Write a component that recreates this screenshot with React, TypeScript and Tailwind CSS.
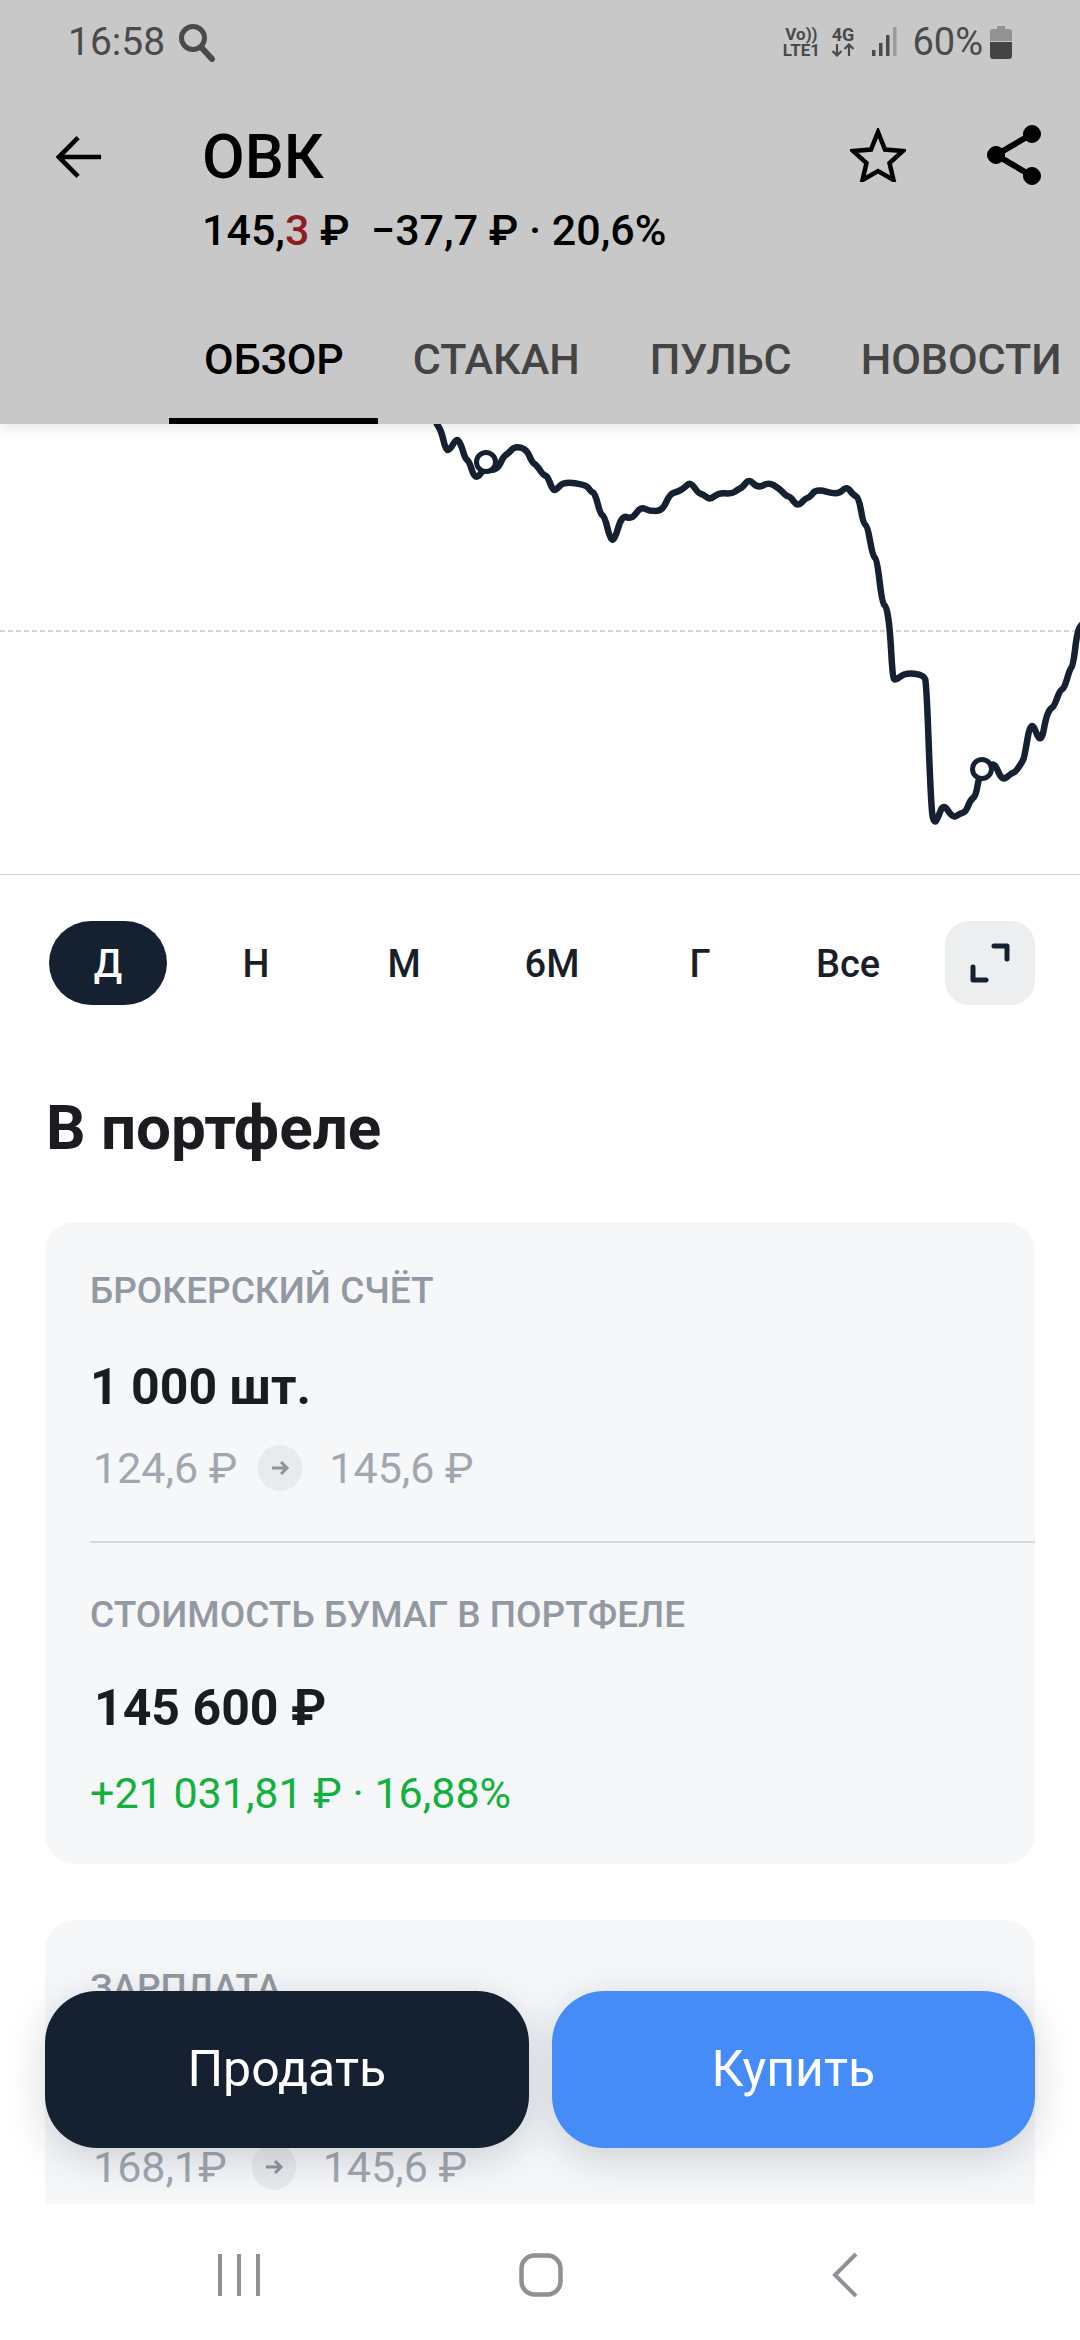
// Points read off the reference chart, as crop coordinates
const chartPoints = [
  [85, 42], [95, 60], [105, 120], [115, 120], [130, 85], [140, 100], [150, 145], [160, 155], [170, 200], [182, 200],
  [190, 180], [225, 180], [238, 140], [250, 130], [265, 108], [292, 118], [305, 158], [315, 165], [330, 195], [340, 198],
  [352, 240], [360, 240], [378, 215], [430, 225], [440, 245], [450, 250], [462, 312], [472, 320], [485, 390], [495, 390],
  [512, 315], [535, 328], [555, 290], [575, 303], [605, 303], [622, 252], [640, 245], [655, 235], [670, 215], [688, 250],
  [698, 252], [715, 270], [735, 248], [765, 252], [780, 238], [790, 232], [805, 206], [825, 235], [850, 217], [875, 235],
  [890, 258], [900, 260], [917, 290], [935, 265], [945, 262], [960, 236], [1010, 255], [1030, 228], [1045, 255], [1058, 262],
  [1068, 340], [1078, 348], [1090, 438], [1100, 448], [1112, 580], [1122, 590], [1130, 660], [1136, 800], [1142, 812], [1165, 788],
  [1208, 795], [1214, 820], [1225, 1200], [1232, 1240], [1240, 1225], [1253, 1180], [1275, 1224], [1290, 1212], [1305, 1205], [1315, 1170],
  [1328, 1158], [1335, 1100], [1345, 1105], [1368, 1048], [1388, 1114], [1410, 1090], [1420, 1085], [1435, 1055], [1440, 1040], [1455, 925],
  [1478, 1006], [1490, 920], [1500, 895], [1508, 890], [1522, 840], [1532, 835], [1545, 775], [1552, 770], [1562, 660], [1575, 640],
]

const toChart = ([x, y]: number[]) => [400 + x / 2.306, 410 + y / 3 - 424]

// Round the corners by curving through the midpoints
function buildLinePath() {
  const pts = chartPoints.map(toChart)
  let d = `M${pts[0][0].toFixed(1)} ${pts[0][1].toFixed(1)}`
  for (let i = 1; i < pts.length - 1; i++) {
    const mx = (pts[i][0] + pts[i + 1][0]) / 2
    const my = (pts[i][1] + pts[i + 1][1]) / 2
    d += ` Q${pts[i][0].toFixed(1)} ${pts[i][1].toFixed(1)} ${mx.toFixed(1)} ${my.toFixed(1)}`
  }
  const last = pts[pts.length - 1]
  return `${d} L${last[0].toFixed(1)} ${last[1].toFixed(1)}`
}

function Chart() {
  return (
    <div className="h-[451px] shrink-0 border-b border-[#d0d2d4]">
      <svg viewBox="0 0 1080 450" className="block h-[450px] w-[1080px]">
        <line x1="0" y1="207" x2="1080" y2="207" stroke="#c8cacc" strokeWidth="1.5" strokeDasharray="5 3" />
        <path d={buildLinePath()} fill="none" stroke="#152030" strokeWidth="6.5" strokeLinejoin="round" strokeLinecap="round" />
        <circle cx="486" cy="38" r="9.500" fill="#fff" stroke="#152030" strokeWidth="5" />
        <circle cx="982" cy="345" r="9.500" fill="#fff" stroke="#152030" strokeWidth="5" />
      </svg>
    </div>
  )
}

function StatusBar() {
  return (
    <div className="flex h-[84px] items-center pl-[68px] pr-[68px] text-[#4a4a4a]">
      <span className="text-[39px] leading-[44px]">16:58</span>
      <svg viewBox="0 0 40 40" className="ml-[12px] h-[40px] w-[40px]" fill="none" stroke="#4a4a4a">
        <circle cx="16" cy="16" r="11.500" strokeWidth="5" />
        <path d="M24 25l11 12" strokeWidth="6" strokeLinecap="round" />
      </svg>
      <div className="ml-auto flex items-center">
        <div className="flex w-[40px] flex-col items-center text-[17px] font-bold leading-[16px]">
          <span>Vo))</span>
          <span>LTE1</span>
        </div>
        <div className="ml-[8px] flex w-[27px] flex-col items-center text-[18px] font-bold leading-[16px]">
          <span>4G</span>
          <svg viewBox="0 0 26 14" className="h-[14px] w-[26px]" fill="none" stroke="#4a4a4a" strokeWidth="2.200">
            <path d="M7 1v11M2.500 8L7 12.500 11.500 8M19 13V2M14.500 6L19 1.500 23.500 6" />
          </svg>
        </div>
        <svg viewBox="0 0 26 32" className="ml-[15px] h-[32px] w-[26px]">
          <rect x="1" y="24" width="3.500" height="6" fill="#4a4a4a" />
          <rect x="8" y="17" width="3.500" height="13" fill="#4a4a4a" />
          <rect x="15" y="9" width="3.500" height="21" fill="#4a4a4a" />
          <rect x="22" y="1" width="3.500" height="29" fill="#9a9a9a" />
        </svg>
        <span className="ml-[15px] text-[38px] leading-[44px]">60%</span>
        <svg viewBox="0 0 22 33" className="ml-[7px] h-[33px] w-[22px]">
          <path d="M7 0h8v3h4a3 3 0 0 1 3 3v9H0V6a3 3 0 0 1 3-3h4z" fill="#929292" />
          <path d="M0 16h22v14a3 3 0 0 1-3 3H3a3 3 0 0 1-3-3z" fill="#444" />
        </svg>
      </div>
    </div>
  )
}

function TopBar() {
  return (
    <div className="relative z-10 h-[424px] shrink-0 bg-[#c8c8c8] shadow-[0_4px_14px_rgba(0,0,0,0.1)]">
      <StatusBar />
      <div className="flex pl-[56px] pt-[38px]">
        <svg viewBox="0 0 50 46" className="mt-[12px] h-[46px] w-[46px]" fill="none" stroke="#000" strokeWidth="5">
          <path d="M49 23H5M24 2L3 23l21 21" />
        </svg>
        <div className="ml-[100px] flex-1">
          <div className="text-[62px] font-medium leading-[70px] text-black">ОВК</div>
          <div className="mt-[13px] whitespace-pre text-[43px] font-medium leading-[50px] text-black">
            145,<span className="text-[#8f1d1f]">3</span> ₽{'  '}−37,7 ₽ · 20,6%
          </div>
        </div>
        <svg viewBox="0 0 56 54" className="mr-[81px] mt-[6px] h-[54px] w-[56px]" fill="none" stroke="#000" strokeWidth="4.500" strokeLinejoin="miter">
          <path d="M28 4l7 17.500 18 1.500-13.500 12 4 17L28 43l-15.500 9 4-17L3 23l18-1.500z" />
        </svg>
        <svg viewBox="0 0 54 60" className="mr-[39px] mt-[3px] h-[60px] w-[54px]" fill="#000" stroke="#000">
          <circle cx="45" cy="9" r="8.500" />
          <circle cx="9" cy="30" r="8.500" />
          <circle cx="45" cy="51" r="8.500" />
          <path d="M45 9L9 30l36 21" fill="none" strokeWidth="6" />
        </svg>
      </div>
      <div className="absolute bottom-0 left-0 flex pl-[169px]">
        <div className="flex h-[134px] items-center border-b-[6px] border-black pl-[35px] pr-[34px] pt-[10px] text-[43px] font-medium text-black">ОБЗОР</div>
        <div className="flex h-[134px] items-center px-[35px] pt-[4px] text-[43px] font-medium text-[#444]">СТАКАН</div>
        <div className="flex h-[134px] items-center pl-[35px] pr-[34px] pt-[4px] text-[43px] font-medium text-[#444]">ПУЛЬС</div>
        <div className="flex h-[134px] items-center whitespace-nowrap px-[35px] pt-[4px] text-[43px] font-medium text-[#444]">НОВОСТИ</div>
      </div>
    </div>
  )
}

function RangeTabs() {
  const ranges = ['Н', 'М', '6М', 'Г', 'Все']
  return (
    <div className="mt-[46px] flex h-[84px] shrink-0 pl-[49px] pr-[45px]">
      <div className="flex w-[118px] items-center justify-center rounded-full bg-[#152030] pt-[2px] text-[38px] font-medium text-white">Д</div>
      {ranges.map((r) => (
        <div key={r} className="ml-[30px] flex w-[118px] items-center justify-center pt-[2px] text-[38px] font-medium text-[#1a1f27]">
          {r}
        </div>
      ))}
      <div className="ml-auto flex w-[90px] items-center justify-center rounded-[24px] bg-[#eceef0]">
        <svg viewBox="0 0 40 40" className="h-[40px] w-[40px]" fill="none" stroke="#152030" strokeWidth="5" strokeLinecap="round" strokeLinejoin="round">
          <path d="M24 3h13v13M3 24v13h13" />
        </svg>
      </div>
    </div>
  )
}

function PriceChange({ from, to, gap }: { from: string; to: string; gap: string }) {
  return (
    <div className="flex h-[46px] items-center text-[43px] leading-[46px] text-[#a2a7af]">
      <span className="ml-[3px]">{from}</span>
      <div className={`flex h-[46px] w-[44px] items-center justify-center rounded-full bg-[#e8eaed] ${gap}`}>
        <svg viewBox="0 0 20 20" className="h-[20px] w-[20px]" fill="none" stroke="#8e949c" strokeWidth="3">
          <path d="M2 10h15M11 4l6 6-6 6" />
        </svg>
      </div>
      <span className="ml-[27px]">{to}</span>
    </div>
  )
}

function BottomActions() {
  return (
    <div className="absolute left-[45px] right-[45px] top-[1991px] z-20 flex gap-[23px]">
      <button className="flex h-[157px] flex-1 items-center justify-center rounded-[52px] bg-[#152030] text-[50px] text-white shadow-[0_10px_40px_rgba(20,30,50,0.18)]">Продать</button>
      <button className="flex h-[157px] flex-1 items-center justify-center rounded-[52px] bg-[#458cf9] text-[50px] text-white shadow-[0_10px_40px_rgba(20,30,50,0.18)]">Купить</button>
    </div>
  )
}

function NavBar() {
  return (
    <div className="relative z-30 flex h-[136px] shrink-0 bg-white">
      <svg viewBox="0 0 44 44" className="ml-[217px] mt-[49px] h-[44px] w-[44px]" fill="none" stroke="#8e9196" strokeWidth="4">
        <path d="M3 1v42M22 1v42M41 1v42" />
      </svg>
      <svg viewBox="0 0 44 44" className="ml-[258px] mt-[49px] h-[44px] w-[44px]" fill="none" stroke="#8e9196" strokeWidth="4.500">
        <rect x="2.500" y="2.500" width="39" height="39" rx="13" />
      </svg>
      <svg viewBox="0 0 28 46" className="ml-[268px] mt-[48px] h-[46px] w-[28px]" fill="none" stroke="#8e9196" strokeWidth="4">
        <path d="M25 2L4 23l21 21" />
      </svg>
    </div>
  )
}

export default function App() {
  return (
    <div className="relative flex h-[2340px] w-[1080px] flex-col overflow-hidden bg-white font-[Roboto,sans-serif]">
      <TopBar />
      <div className="flex min-h-0 flex-1 flex-col overflow-hidden">
        <Chart />
        <RangeTabs />
        <h2 className="ml-[46px] mt-[91px] shrink-0 text-[62px] font-bold leading-[64px] text-[#1a1c20]">В портфеле</h2>

        <div className="mx-[45px] mt-[62px] shrink-0 rounded-[30px] bg-[#f5f7f9] pb-[46px] pl-[45px] pt-[46px]">
          <div className="pt-[1px] text-[37px] font-medium leading-[44px] text-[#9299a2]">БРОКЕРСКИЙ СЧЁТ</div>
          <div className="mt-[44px] text-[50px] font-bold leading-[60px] text-[#1a1c20]">1 000 шт.</div>
          <div className="mt-[28px]">
            <PriceChange from="124,6 ₽" to="145,6 ₽" gap="ml-[21px]" />
          </div>
          <div className="mt-[50px] h-[1.5px] bg-[#d5d8dc]" />
          <div className="mt-[50px] text-[37px] font-medium leading-[44px] text-[#9299a2]">СТОИМОСТЬ БУМАГ В ПОРТФЕЛЕ</div>
          <div className="ml-[4px] mt-[41px] text-[50px] font-bold leading-[60px] text-[#1a1c20]">145 600 ₽</div>
          <div className="mt-[30px] text-[43px] leading-[50px] text-[#12b03c]">+21 031,81 ₽ · 16,88%</div>
        </div>

        <div className="mx-[45px] mt-[56px] shrink-0 rounded-[30px] bg-[#f5f7f9] pb-[46px] pl-[45px] pt-[46px]">
          <div className="text-[37px] font-medium leading-[44px] text-[#9299a2]">ЗАРПЛАТА</div>
          <div className="mt-[134px]">
            <PriceChange from="168,1₽" to="145,6 ₽" gap="ml-[25px]" />
          </div>
        </div>
      </div>
      <BottomActions />
      <NavBar />
    </div>
  )
}
